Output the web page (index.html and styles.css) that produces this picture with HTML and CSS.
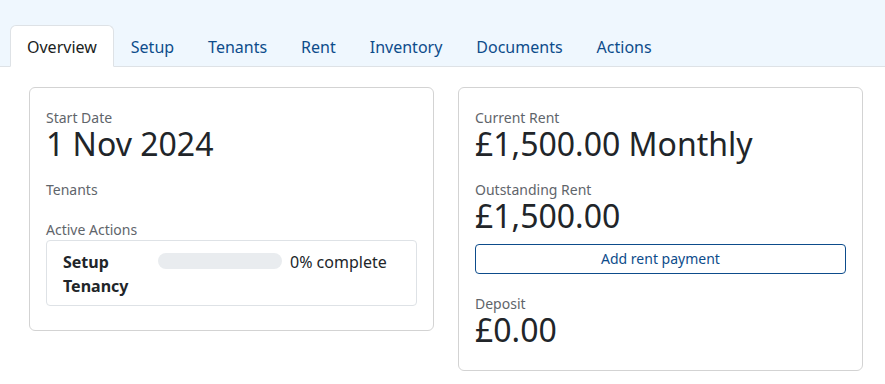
FILE: index.html
```html
<!DOCTYPE html>
<html lang="en">
<head>
<meta charset="utf-8">
<title>Tenancy overview</title>
<link rel="stylesheet" href="styles.css">
</head>
<body>
<header class="tabbar">
  <nav class="tabs">
    <a class="tab active" href="#">Overview</a>
    <a class="tab" href="#">Setup</a>
    <a class="tab" href="#">Tenants</a>
    <a class="tab" href="#">Rent</a>
    <a class="tab" href="#">Inventory</a>
    <a class="tab" href="#">Documents</a>
    <a class="tab" href="#">Actions</a>
  </nav>
</header>
<main class="content">
  <section class="card">
    <div class="field">
      <div class="label">Start Date</div>
      <div class="value">1 Nov 2024</div>
    </div>
    <div class="field">
      <div class="label">Tenants</div>
    </div>
    <div class="field">
      <div class="label">Active Actions</div>
      <div class="action-box">
        <div class="action-name">Setup Tenancy</div>
        <div class="progress"><div class="progress-fill" style="width:0%"></div></div>
        <div class="action-status">0% complete</div>
      </div>
    </div>
  </section>
  <section class="card">
    <div class="field">
      <div class="label">Current Rent</div>
      <div class="value">£1,500.00 Monthly</div>
    </div>
    <div class="field">
      <div class="label">Outstanding Rent</div>
      <div class="value">£1,500.00</div>
      <button class="btn-outline" type="button">Add rent payment</button>
    </div>
    <div class="field">
      <div class="label">Deposit</div>
      <div class="value">£0.00</div>
    </div>
  </section>
</main>
</body>
</html>
```
FILE: styles.css
```css
* { box-sizing: border-box; }
html, body { margin: 0; padding: 0; background: #ffffff; }
body {
  font-family: "Noto Sans", "Open Sans", sans-serif;
  color: #212529;
  font-size: 16px;
  line-height: 1.5;
}
.tabbar {
  background: #eff7fe;
  border-bottom: 1px solid #dee2e6;
  padding: 25px 0 0 10px;
}
.tabs {
  display: flex;
  margin-bottom: -1px;
}
.tab {
  display: block;
  padding: 9px 16px 7px;
  border: 1px solid transparent;
  border-top-left-radius: 6px;
  border-top-right-radius: 6px;
  color: #0d4c8b;
  text-decoration: none;
  line-height: 24px;
}
.tab.active {
  background: #ffffff;
  color: #1a1d21;
  border-color: #dee2e6 #dee2e6 #ffffff;
}
.content {
  display: grid;
  grid-template-columns: 405px 405px;
  gap: 24px;
  align-items: start;
  padding: 20px 0 0 29px;
}
.card {
  border: 1px solid #d3d3d3;
  border-radius: 6px;
  padding: 19px 16px 5px;
  background: #fff;
}
.field { margin-bottom: 19px; }
.label {
  font-size: 14px;
  line-height: 21px;
  color: #5f656b;
}
.value {
  font-size: 32px;
  line-height: 32px;
  color: #212529;
}
.action-box {
  display: flex;
  align-items: flex-start;
  border: 1px solid #dee2e6;
  border-radius: 4px;
  padding: 9px 16px 7px;
}
.action-name {
  width: 95px;
  font-weight: 700;
  line-height: 24px;
}
.progress {
  width: 124px;
  height: 16px;
  margin-top: 3px;
  border-radius: 8px;
  background: #e9ecef;
  overflow: hidden;
}
.progress-fill { height: 100%; background: #0d4c8b; }
.action-status {
  margin-left: 8px;
  line-height: 24px;
}
.btn-outline {
  display: block;
  width: 100%;
  margin-top: 12px;
  height: 30px;
  padding: 0 8px;
  border: 1px solid #0d4c8b;
  border-radius: 4px;
  background: #fff;
  color: #0d4c8b;
  font-family: inherit;
  font-size: 14px;
  line-height: 28px;
  cursor: pointer;
}
```
